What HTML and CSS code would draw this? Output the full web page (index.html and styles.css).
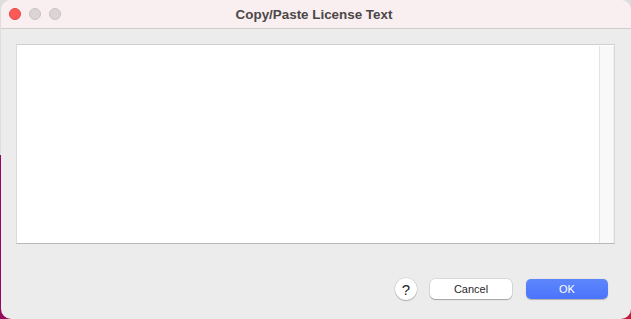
FILE: index.html
```html
<!DOCTYPE html>
<html lang="en">
<head>
  <meta charset="UTF-8">
  <meta name="viewport" content="width=device-width, initial-scale=1.0">
  <title>Copy/Paste License Text</title>
  <link rel="stylesheet" href="styles.css">
</head>
<body>

  <div class="window">
    <!-- Barra de título -->
    <div class="titlebar">
      <div class="lights">
        <span class="light close"></span>
        <span class="light off"></span>
        <span class="light off"></span>
      </div>
      <div class="title">Copy/Paste License Text</div>
    </div>

    <div class="content">
      <!-- Área de texto -->
      <div class="text-box">
        <textarea class="license"></textarea>
        <div class="scrollbar"></div>
      </div>

      <!-- Botões -->
      <div class="actions">
        <button class="help">?</button>
        <button class="btn">Cancel</button>
        <button class="btn primary">OK</button>
      </div>
    </div>
  </div>

</body>
</html>
```

FILE: styles.css
```css
html, body {
  height: 100%;
}

body {
  margin: 0;
  padding: 0 0 0 1px;
  box-sizing: border-box;
  font-family: "Helvetica Neue", "Liberation Sans", Arial, sans-serif;
  background:
    linear-gradient(to right, #95085e 0, #9a0b5c 70%, #c41a3a 100%) 0 155px / 100% 100% no-repeat,
    #dedede;
  overflow: hidden;
}

.window {
  height: 100%;
  background-color: #ececec;
  border-radius: 10px;
  overflow: hidden;
  display: flex;
  flex-direction: column;
}

.titlebar {
  height: 28px;
  background-color: #f9eef0;
  border-bottom: 1px solid #d1cccd;
  position: relative;
  display: flex;
  align-items: center;
  justify-content: center;
  flex-shrink: 0;
}

.lights {
  position: absolute;
  left: 8px;
  top: 8px;
  display: flex;
  gap: 8px;
}

.light {
  width: 12px;
  height: 12px;
  border-radius: 50%;
  box-sizing: border-box;
}

.light.close {
  background-color: #fe5a59;
  border: 1px solid #e2463f;
}

.light.off {
  background-color: #dcd5d6;
  border: 1px solid #c9c2c3;
}

.title {
  font-size: 13.4px;
  font-weight: bold;
  color: #4b4748;
  margin-right: 4px;
}

.content {
  flex: 1;
  display: flex;
  flex-direction: column;
  padding: 15px 16px 19px 15px;
}

.text-box {
  height: 198px;
  display: flex;
  background-color: #fff;
  border-top: 1px solid #cfcfcf;
  border-left: 1px solid #d9d9d9;
  border-right: 1px solid #d9d9d9;
  border-bottom: 1px solid #b9b9b9;
}

.license {
  flex: 1;
  border: none;
  outline: none;
  resize: none;
  margin: 0;
  padding: 4px;
  font-family: "Liberation Sans", Arial, sans-serif;
  font-size: 12px;
}

.scrollbar {
  width: 13px;
  margin-top: 1px;
  background-color: #f9f9f9;
  border-left: 1px solid #e4e4e4;
  border-right: 1px solid #eeeeee;
}

.actions {
  margin-top: auto;
  padding-right: 7px;
  display: flex;
  justify-content: flex-end;
  align-items: center;
  gap: 14px;
}

.actions button {
  font-family: "Liberation Sans", Arial, sans-serif;
  cursor: pointer;
}

.help {
  width: 22px;
  height: 22px;
  border-radius: 50%;
  border: none;
  background-color: #fff;
  box-shadow: 0 0 0 0.5px rgba(0, 0, 0, 0.15), 0 1px 1px rgba(0, 0, 0, 0.2);
  font-size: 15px;
  color: #222;
  padding: 0;
  margin-right: -1px;
}

.btn {
  width: 82px;
  height: 20px;
  border-radius: 5px;
  border: none;
  background-color: #fff;
  box-shadow: 0 0 0 0.5px rgba(0, 0, 0, 0.15), 0 1px 1px rgba(0, 0, 0, 0.25);
  font-size: 11px;
  color: #2a2a2a;
  padding: 0;
}

.btn.primary {
  background: linear-gradient(to bottom, #5d86fc, #4b74fb);
  color: #fff;
  box-shadow: 0 0.5px 1px rgba(0, 0, 0, 0.25);
}
```
